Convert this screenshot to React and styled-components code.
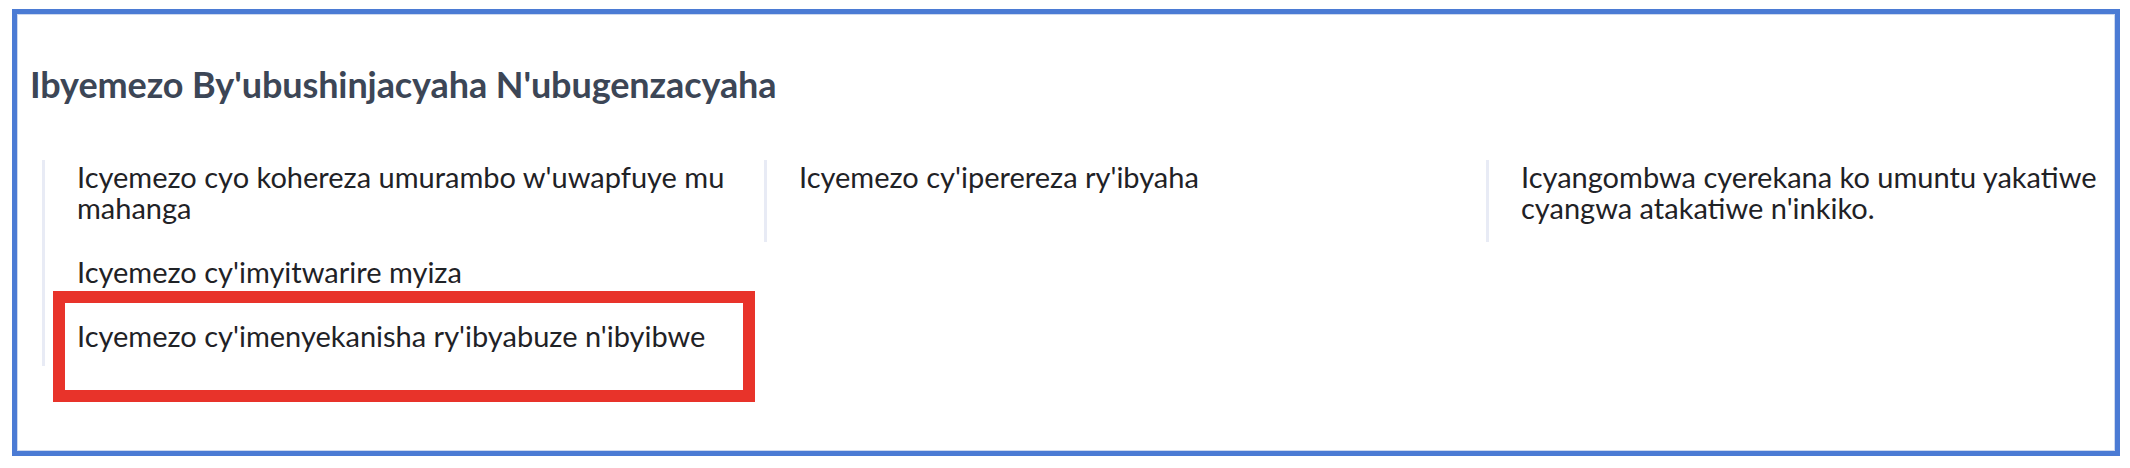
import React from "react";
import styled, { createGlobalStyle } from "styled-components";

const GlobalStyle = createGlobalStyle`
  * { box-sizing: border-box; }
  body {
    margin: 0;
    background: #ffffff;
    font-family: Lato, "Open Sans", sans-serif;
    overflow: hidden;
  }
`;

const Page = styled.div`
  padding: 9px 10px 0 12px;
`;

const Card = styled.section`
  width: 2108px;
  border: 5px solid #4b7bd4;
  box-shadow: inset 0 0 0 1px #cdd8ee;
  background: #fff;
  padding: 50px 13px 85px;
`;

const Title = styled.h2`
  margin: 0 0 56px;
  font-family: Lato, sans-serif;
  font-weight: 700;
  font-size: 36px;
  line-height: 40px;
  color: #3c4656;
  letter-spacing: -0.1px;
`;

const Columns = styled.div`
  display: grid;
  grid-template-columns: 722px 722px 1fr;
  align-items: start;
  margin-left: 12px;
`;

const List = styled.ul`
  list-style: none;
  margin: 0;
  padding: 1px 0 15px 32px;
  min-height: 82px;
  border-left: 3px solid #e8ebf5;
  display: flex;
  flex-direction: column;
  gap: 33px;
`;

const Item = styled.li`
  position: relative;
  font-family: Lato, sans-serif;
  font-size: 29px;
  line-height: 31px;
  color: #1f2226;

  ${(p) =>
    p.$marked &&
    `
    &::after {
      content: "";
      position: absolute;
      top: -29px;
      left: -24px;
      right: 9px;
      bottom: -51px;
      border: 12px solid #e8332a;
      pointer-events: none;
    }
  `}
`;

const columns = [
  [
    { text: "Icyemezo cyo kohereza umurambo w'uwapfuye mu mahanga" },
    { text: "Icyemezo cy'imyitwarire myiza" },
    { text: "Icyemezo cy'imenyekanisha ry'ibyabuze n'ibyibwe", marked: true },
  ],
  [{ text: "Icyemezo cy'iperereza ry'ibyaha" }],
  [{ text: "Icyangombwa cyerekana ko umuntu yakatiwe cyangwa atakatiwe n'inkiko." }],
];

export default function App() {
  return (
    <Page>
      <GlobalStyle />
      <Card>
        <Title>Ibyemezo By'ubushinjacyaha N'ubugenzacyaha</Title>
        <Columns>
          {columns.map((items, i) => (
            <List key={i}>
              {items.map((it) => (
                <Item key={it.text} $marked={it.marked}>
                  {it.text}
                </Item>
              ))}
            </List>
          ))}
        </Columns>
      </Card>
    </Page>
  );
}
